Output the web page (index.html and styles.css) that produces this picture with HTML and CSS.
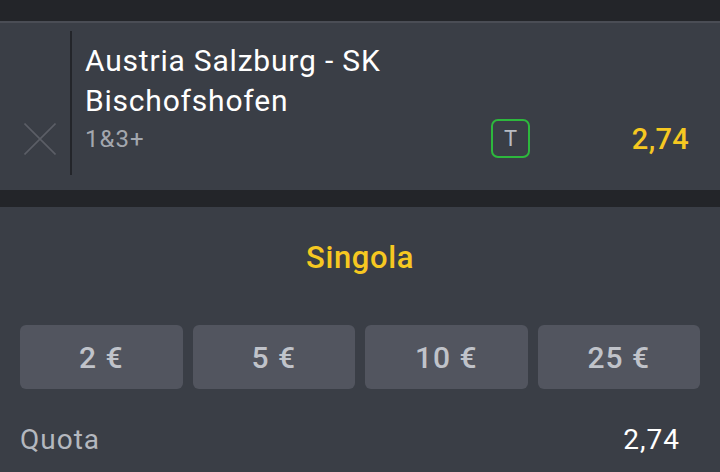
FILE: index.html
```html
<!DOCTYPE html>
<html lang="it">
<head>
<meta charset="utf-8">
<link rel="stylesheet" href="styles.css">
</head>
<body>
<div class="topbar"></div>
<div class="card">
  <div class="remove">
    <svg class="x-icon" width="32" height="32" viewBox="0 0 32 32"><path d="M0.5 0.5L31.5 31.5M31.5 0.5L0.5 31.5" stroke="#5b5e66" stroke-width="1.6" fill="none"/></svg>
  </div>
  <div class="divider"></div>
  <div class="info">
    <div class="title">Austria Salzburg - SK Bischofshofen</div>
    <div class="row">
      <span class="market">1&amp;3+</span>
      <span class="badge">T</span>
      <span class="odds">2,74</span>
    </div>
  </div>
</div>
<div class="band"></div>
<div class="panel">
  <div class="mode">Singola</div>
  <div class="stakes">
    <button class="stake">2 €</button>
    <button class="stake">5 €</button>
    <button class="stake">10 €</button>
    <button class="stake">25 €</button>
  </div>
  <div class="quota">
    <span class="q-label">Quota</span>
    <span class="q-value">2,74</span>
  </div>
</div>
</body>
</html>
```
FILE: styles.css
```css
html, body {
  margin: 0;
  padding: 0;
}
body {
  width: 720px;
  height: 472px;
  overflow: hidden;
  background: #3a3e46;
  font-family: Roboto, "Noto Sans", sans-serif;
  color: #fff;
  letter-spacing: 0.8px;
}
.topbar {
  height: 21px;
  background: #232529;
  border-bottom: 2px solid #4a4d55;
}
.card {
  height: 167px;
  display: flex;
  background: #3a3e46;
}
.remove {
  width: 70px;
  box-sizing: border-box;
  padding-left: 24px;
  padding-bottom: 35px;
  display: flex;
  flex-direction: column;
  justify-content: flex-end;
}
.x-icon {
  display: block;
}
.divider {
  width: 2px;
  margin: 8px 0 15px;
  background: #23252a;
}
.info {
  flex: 1;
  padding: 18px 31px 0 13px;
}
.title {
  font-size: 30px;
  line-height: 40px;
  width: 330px;
}
.row {
  display: flex;
  align-items: center;
  height: 39px;
  margin-top: -2px;
}
.market {
  flex: 1;
  font-size: 24px;
  letter-spacing: 1px;
  color: #a3a7ae;
}
.badge {
  width: 39px;
  height: 39px;
  box-sizing: border-box;
  border: 2px solid #2db83d;
  border-radius: 7px;
  display: flex;
  align-items: center;
  justify-content: center;
  font-size: 22px;
  letter-spacing: 0;
  color: #b8bcc3;
}
.odds {
  width: 159px;
  text-align: right;
  font-size: 29px;
  font-weight: 500;
  letter-spacing: 0.3px;
  color: #f6c821;
}
.band {
  height: 17px;
  background: #232529;
}
.panel {
  padding: 31px 20px 0 20px;
}
.mode {
  text-align: center;
  font-size: 31px;
  line-height: 40px;
  font-weight: 500;
  letter-spacing: 0.6px;
  color: #f6c821;
}
.stakes {
  margin-top: 47px;
  display: grid;
  grid-template-columns: repeat(4, 1fr);
  gap: 10px;
}
.stake {
  height: 64px;
  border: none;
  border-radius: 6px;
  background: #52555f;
  color: #c0c3ca;
  font-family: Roboto, "Noto Sans", sans-serif;
  font-size: 30px;
  font-weight: 500;
  letter-spacing: 1px;
  padding: 0;
}
.quota {
  margin-top: 31px;
  display: flex;
  justify-content: space-between;
  padding-right: 20px;
  font-size: 28px;
  line-height: 40px;
  letter-spacing: 1px;
}
.q-label {
  color: #b4b8bf;
}
.q-value {
  color: #fff;
}
```
